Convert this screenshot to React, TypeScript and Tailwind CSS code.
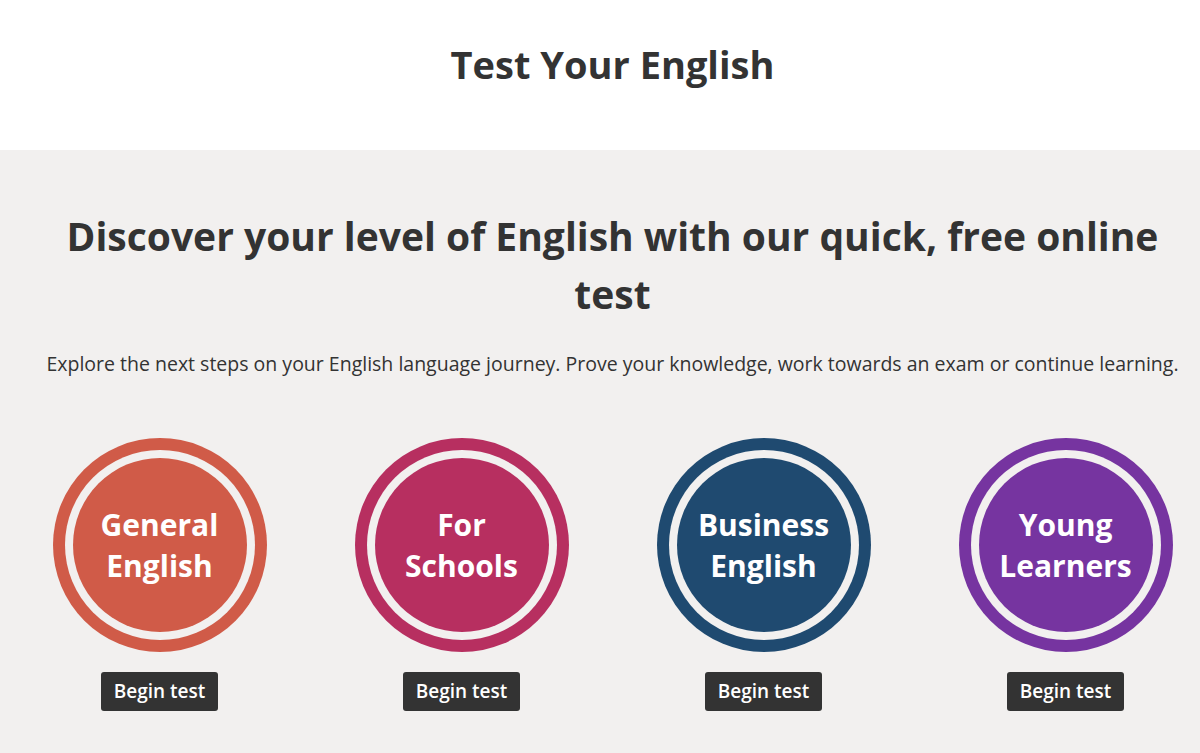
const tests = [
  { top: 'General', bottom: 'English', ring: 'bg-[#d05b48]' },
  { top: 'For', bottom: 'Schools', ring: 'bg-[#b72f60]' },
  { top: 'Business', bottom: 'English', ring: 'bg-[#1f4a70]' },
  { top: 'Young', bottom: 'Learners', ring: 'bg-[#7634a0]' },
];

function TestCircle({ top, bottom, ring }: { top: string; bottom: string; ring: string }) {
  return (
    <div className="flex w-[214px] flex-col items-center">
      <div className={`flex h-[214px] w-[214px] items-center justify-center rounded-full ${ring}`}>
        <div className="flex h-[190px] w-[190px] items-center justify-center rounded-full bg-[#f2f0ef]">
          <div
            className={`flex h-[174px] w-[174px] flex-col items-center justify-center rounded-full ${ring} text-center text-[30px] font-bold leading-[41px] text-white`}
          >
            <span>{top}</span>
            <span>{bottom}</span>
          </div>
        </div>
      </div>
      <button className="mt-[20px] h-[39px] rounded-[3px] bg-[#333333] px-[13px] text-[19px] font-semibold text-white">
        Begin test
      </button>
    </div>
  );
}

export default function App() {
  return (
    <div className="min-h-screen overflow-hidden bg-[#f2f0ef] font-['Open_Sans',sans-serif] text-[#333333]">
      {/* page is laid out a little wider than the window */}
      <div className="w-[1225px]">
        <header className="flex h-[150px] justify-center bg-white pt-[38px]">
          <h1 className="text-[38px] font-bold leading-[52px]">Test Your English</h1>
        </header>

        <main className="pt-[57px]">
          <h2 className="mx-auto max-w-[1120px] text-center text-[39px] font-bold leading-[58px]">
            Discover your level of English with our quick, free online test
          </h2>
          <p className="mt-[28px] whitespace-nowrap text-center text-[19.5px] leading-[26px]">
            Explore the next steps on your English language journey. Prove your knowledge, work towards an exam or continue learning.
          </p>

          <div className="mt-[61px] flex justify-center gap-[88px]">
            {tests.map((t) => (
              <TestCircle key={t.top} {...t} />
            ))}
          </div>
        </main>
      </div>
    </div>
  );
}
